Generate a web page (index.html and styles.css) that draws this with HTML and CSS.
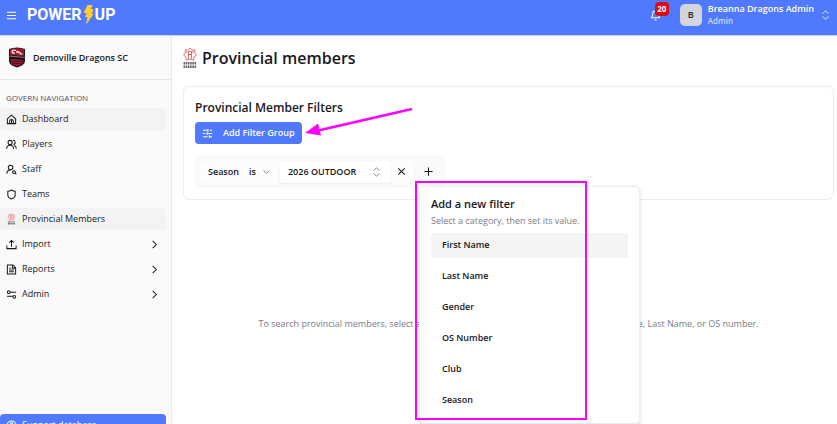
FILE: index.html
```html
<!DOCTYPE html>
<html lang="en">
<head>
    <meta charset="UTF-8">
    <meta name="viewport" content="width=device-width, initial-scale=1.0">
    <title>Provincial members</title>
    <link rel="stylesheet" href="styles.css">
</head>
<body>
    <svg class="defs" aria-hidden="true">
        <symbol id="ontario" viewBox="0 0 14 22">
            <g fill="none" stroke="#e5484d" stroke-width=".8">
                <path d="M7 1l2 2.200 3-.3-.4 3L13.500 8l-2.300 1.800-.5 3.400L7 12.200l-3.700 1-.5-3.400L.5 8l1.900-2.100-.4-3 3 .3z"/>
                <path d="M3 5.500c2-1.500 6-1.500 8 0M5 7.500h4M5.500 5v7M8.500 5v7"/>
            </g>
            <path d="M.5 16.200h13M.5 19.700h13" stroke="#666" stroke-width="2.400" stroke-dasharray="1.600 .6" fill="none"/>
        </symbol>
        <symbol id="chevron" viewBox="0 0 24 24"><path d="m8 20 8-8-8-8"/></symbol>
        <symbol id="updown" viewBox="0 0 24 24"><path d="m4 16 8 7 8-7M4 8l8-7 8 7"/></symbol>
    </svg>

    <header class="topbar">
        <button class="menu-btn" type="button" aria-label="Menu">
            <svg class="icon" viewBox="0 0 24 24"><path d="M2 5h20M2 12h20M2 19h20"/></svg>
        </button>
        <a class="brand" href="#">
            <span>POWER</span>
            <svg class="bolt" viewBox="0 0 10 22"><path d="M4 1h5L7.500 5H10L8.500 10H10L2.500 21 4 13H1.500L3 9H0z" fill="#fbce2f"/></svg>
            <span>UP</span>
        </a>
        <button class="bell" type="button" aria-label="Notifications">
            <svg class="icon" viewBox="0 0 24 24"><path d="M10.300 21a2 2 0 0 0 3.400 0M3.300 15.300A1 1 0 0 0 4 17h16a1 1 0 0 0 .7-1.700C19.400 14 18 12.500 18 8A6 6 0 0 0 6 8c0 4.500-1.400 6-2.700 7.300"/></svg>
            <span class="badge">20</span>
        </button>
        <button class="user" type="button">
            <span class="avatar">B</span>
            <span class="user-text">
                <span class="user-name">Breanna Dragons Admin</span>
                <span class="user-role">Admin</span>
            </span>
            <svg class="icon small"><use href="#updown"/></svg>
        </button>
    </header>

    <div class="shell">
        <aside class="sidebar">
            <div class="club">
                <svg class="club-logo" viewBox="0 0 18 21">
                    <path d="M1 2q8-3 16 0v12q0 4-8 6.500Q1 18 1 14z" fill="#1b1418"/>
                    <path d="M2 2.500q7-2.500 14 0V9L2 8z" fill="#a3142c"/>
                    <path d="M2.500 12l13 1v1.500q0 3-6.500 4.800-6.500-1.800-6.500-4.800z" fill="#8f1a2e"/>
                    <path d="M8 3.500q-4-1-4 1t3 1.500M9 6V4.500l2 .5v1.500M12.500 5.500v1.500h2" fill="none" stroke="#fff" stroke-width="1.200"/>
                    <path d="M0 9l18 1.500" stroke="#aaa" stroke-width=".7"/>
                    <path d="M3 14.500h12M4 16.500h10" stroke="#4d0d1a" stroke-width=".7"/>
                </svg>
                <span>Demoville Dragons SC</span>
            </div>
            <nav class="nav">
                <h2 class="nav-title">GOVERN NAVIGATION</h2>
                <a class="nav-item active" href="#">
                    <svg class="icon" viewBox="0 0 24 24"><path d="M3 10.500 12 2.500l9 8V21H3zM8 21v-5a4 4 0 0 1 8 0v5M12 13v8"/></svg>
                    <span>Dashboard</span>
                </a>
                <a class="nav-item" href="#">
                    <svg class="icon" viewBox="0 0 24 24"><circle cx="9" cy="7.500" r="4.500"/><path d="M1.500 21c0-5 3-7.500 7.500-7.500s7.500 2.500 7.500 7.500M15 3a4.500 4.500 0 0 1 1 9M18 14c3 1 4.500 3.500 4.500 7"/></svg>
                    <span>Players</span>
                </a>
                <a class="nav-item" href="#">
                    <svg class="icon" viewBox="0 0 24 24"><circle cx="10" cy="7.500" r="5"/><path d="M2 21c0-5 3-8 8-8M20 20l2.500 2.500"/><circle cx="17.500" cy="17.500" r="3"/></svg>
                    <span>Staff</span>
                </a>
                <a class="nav-item" href="#">
                    <svg class="icon" viewBox="0 0 24 24"><path d="M20 13c0 5-3.500 7.500-8 9-4.500-1.500-8-4-8-9V5c3 0 6-1 8-3 2 2 5 3 8 3z"/></svg>
                    <span>Teams</span>
                </a>
                <a class="nav-item active" href="#">
                    <svg class="mark"><use href="#ontario"/></svg>
                    <span>Provincial Members</span>
                </a>
                <a class="nav-item" href="#">
                    <svg class="icon" viewBox="0 0 24 24"><path d="M2 14v7h20v-7M12 17V3M7 8l5-5 5 5"/></svg>
                    <span>Import</span>
                    <svg class="icon arrow"><use href="#chevron"/></svg>
                </a>
                <a class="nav-item" href="#">
                    <svg class="icon" viewBox="0 0 24 24"><path d="M15 2H3v20h18V8zM14 2v7h7M7 9h3M7 13h10M7 17h10"/></svg>
                    <span>Reports</span>
                    <svg class="icon arrow"><use href="#chevron"/></svg>
                </a>
                <a class="nav-item" href="#">
                    <svg class="icon" viewBox="0 0 24 24"><circle cx="6" cy="7" r="3"/><circle cx="18" cy="17" r="3"/><path d="M9 7h13M2 16h13"/></svg>
                    <span>Admin</span>
                    <svg class="icon arrow"><use href="#chevron"/></svg>
                </a>
            </nav>
            <button class="support" type="button">
                <svg class="icon" viewBox="0 0 24 24"><circle cx="12" cy="12" r="10"/><path d="M9 9a3 3 0 1 1 4 3c-1 .5-1 1-1 2M12 17v.5"/></svg>
                <span>Support database</span>
            </button>
        </aside>

        <main class="main">
            <h1 class="page-title">
                <svg class="title-mark"><use href="#ontario"/></svg>
                <span>Provincial members</span>
            </h1>

            <section class="card">
                <h2 class="card-title">Provincial Member Filters</h2>
                <div class="add-row">
                    <button class="add-group" type="button">
                        <svg class="icon" viewBox="0 0 24 24"><path d="M2 5h11M17 5h5M13 2v6M2 12h5M11 12h11M11 9v6M2 19h10M16 19h6M16 16v6"/></svg>
                        <span>Add Filter Group</span>
                    </button>
                    <svg class="pointer" viewBox="0 0 110 30">
                        <path d="M108 2 12 24" stroke="#ff00ff" stroke-width="2.500"/>
                        <path d="M1 26 14 16.500 17 28.500z" fill="#ff00ff"/>
                    </svg>
                </div>
                <div class="group">
                    <div class="rule">
                        <label class="field" for="op">Season</label>
                        <span class="pick op">
                            <select id="op"><option>is</option></select>
                            <svg class="icon small down"><use href="#chevron"/></svg>
                        </span>
                        <span class="pick value">
                            <select aria-label="Season value"><option>2026 OUTDOOR</option></select>
                            <svg class="icon small"><use href="#updown"/></svg>
                        </span>
                        <button class="square" type="button" aria-label="Remove filter">
                            <svg class="icon" viewBox="0 0 24 24"><path d="M5 5l14 14M19 5 5 19"/></svg>
                        </button>
                    </div>
                    <div class="add-filter">
                        <button class="square" type="button" aria-label="Add filter">
                            <svg class="icon" viewBox="0 0 24 24"><path d="M12 3v18M3 12h18"/></svg>
                        </button>
                        <div class="popover">
                            <h3 class="popover-title">Add a new filter</h3>
                            <p class="popover-text">Select a category, then set its value.</p>
                            <div class="options">
                                <button class="option active" type="button">First Name</button>
                                <button class="option" type="button">Last Name</button>
                                <button class="option" type="button">Gender</button>
                                <button class="option" type="button">OS Number</button>
                                <button class="option" type="button">Club</button>
                                <button class="option" type="button">Season</button>
                            </div>
                            <div class="highlight"></div>
                        </div>
                    </div>
                </div>
            </section>

            <p class="empty">To search provincial members, select a season filter and then add at least one of First Name, Last Name, or OS number.</p>
        </main>
    </div>
</body>
</html>
```
FILE: styles.css
```css
* {
    box-sizing: border-box;
}
body {
    margin: 0;
    height: 100vh;
    overflow: hidden;
    background-color: #fff;
    color: #18181b;
    font-family: "Open Sans", "Noto Sans", sans-serif;
    font-size: 9px;
    line-height: 14px;
}
h1, h2, h3, p {
    margin: 0;
}
button, select {
    padding: 0;
    border: none;
    background: none;
    color: inherit;
    font: inherit;
    cursor: pointer;
}
a {
    color: inherit;
    text-decoration: none;
}
.defs {
    display: none;
}
.icon {
    flex: none;
    width: 11px;
    height: 11px;
    fill: none;
    stroke: currentColor;
    stroke-width: 2.2;
}
.icon.small {
    width: 9px;
    height: 10px;
}

.topbar {
    display: flex;
    align-items: center;
    height: 36px;
    padding: 0 7px 5px 6px;
    background-color: #5079fe;
    border-bottom: 1px solid #cdd5f3;
    color: #fff;
}
.menu-btn {
    display: flex;
}
.brand {
    display: flex;
    align-items: center;
    margin-right: auto;
    padding-left: 10px;
    font-family: Roboto, sans-serif;
    font-size: 16px;
    font-weight: 700;
    line-height: 22px;
}
.bolt {
    width: 11px;
    height: 22px;
    margin: 0 1px;
}
.bell {
    position: relative;
    display: flex;
    margin-right: 19px;
}
.badge {
    position: absolute;
    top: -8px;
    left: 5px;
    width: 14px;
    border-radius: 4px;
    background-color: #dc0a14;
    font-size: 8px;
    font-weight: 700;
}
.user {
    display: flex;
    align-items: center;
    gap: 6px;
    text-align: left;
}
.avatar {
    width: 22px;
    border-radius: 5px;
    background-color: #d3d5dc;
    color: #27272a;
    font-weight: 600;
    line-height: 22px;
    text-align: center;
}
.user-text {
    display: flex;
    flex-direction: column;
    padding-right: 1px;
    line-height: 12px;
}
.user-name {
    font-weight: 600;
}
.user-role {
    color: #ccd8ff;
    font-size: 8px;
    font-weight: 600;
}

.shell {
    display: flex;
    height: calc(100vh - 24px);
}
.sidebar {
    display: flex;
    flex: none;
    flex-direction: column;
    width: 172px;
    border-right: 1px solid #e5e7eb;
    background-color: #fafafa;
}
.club {
    display: flex;
    align-items: center;
    gap: 7px;
    height: 44px;
    padding-left: 8px;
    border-bottom: 1px solid #e5e7eb;
    font-weight: 600;
}
.club-logo {
    width: 18px;
    height: 21px;
}
.nav {
    display: flex;
    flex-direction: column;
    gap: 3px;
    padding: 10px 5px 0 0;
}
.nav-title {
    padding-left: 6px;
    color: #52525b;
    font-size: 8px;
    font-weight: 500;
    line-height: 15px;
}
.nav-item {
    display: flex;
    align-items: center;
    gap: 5px;
    height: 22px;
    padding: 0 6px;
    border-radius: 4px;
}
.nav-item.active {
    background-color: #f3f3f4;
}
.mark {
    width: 11px;
    height: 12px;
}
.arrow {
    margin-left: auto;
}
.support {
    display: flex;
    align-items: center;
    gap: 5px;
    height: 22px;
    margin: auto 5px 0 0;
    padding: 0 6px;
    border-radius: 4px;
    background-color: #5079fe;
    color: #fff;
}

.main {
    flex: 1;
    padding: 10px 3px 0 11px;
}
.page-title {
    display: flex;
    align-items: center;
    gap: 5px;
    font-size: 16px;
    font-weight: 600;
    line-height: 24px;
}
.title-mark {
    width: 14px;
    height: 22px;
}
.card {
    margin-top: 16px;
    padding: 12px 11px 11px;
    border: 1px solid #ededf0;
    border-radius: 6px;
}
.card-title {
    font-size: 12px;
    font-weight: 600;
    line-height: 18px;
}
.add-row {
    display: flex;
    position: relative;
    margin-top: 5px;
}
.add-group {
    display: flex;
    align-items: center;
    gap: 10px;
    height: 22px;
    padding: 0 7px;
    border-radius: 4px;
    background-color: #5079fe;
    color: #fff;
    font-weight: 600;
}
.pointer {
    position: absolute;
    top: -15px;
    left: 109px;
    width: 110px;
    height: 30px;
}
.group {
    display: flex;
    align-items: center;
    width: fit-content;
    height: 33px;
    margin-top: 11px;
    padding-left: 5px;
    border-radius: 5px;
    background-color: #f9f9f9;
}
.rule {
    display: flex;
    align-items: center;
    padding-left: 8px;
    border-radius: 4px;
    background-color: #fdfdfd;
    font-weight: 600;
}
.field {
    margin-right: 10px;
}
.pick {
    display: flex;
    align-items: center;
    color: #71717a;
}
.pick select {
    appearance: none;
    color: #18181b;
}
.op {
    gap: 6px;
    margin-right: 9px;
}
.down {
    transform: rotate(90deg);
}
.value {
    gap: 15px;
    height: 22px;
    padding: 0 10px 0 8px;
    border-radius: 4px;
    background-color: #fff;
    box-shadow: 0 1px 2px #ececee;
}
.square {
    display: flex;
    align-items: center;
    justify-content: center;
    width: 22px;
    height: 22px;
}
.add-filter {
    position: relative;
    padding: 0 5px;
}
.popover {
    position: absolute;
    z-index: 1;
    top: 25px;
    left: 6px;
    width: 221px;
    padding: 10px 11px;
    border: 1px solid #ececee;
    border-radius: 5px;
    background-color: #fff;
    box-shadow: 0 2px 4px rgba(0, 0, 0, 0.15);
}
.popover-title {
    font-size: 11px;
    font-weight: 600;
}
.popover-text {
    margin: 3px 0 5px;
    color: #7b7b85;
}
.options {
    display: flex;
    flex-direction: column;
    gap: 6px;
}
.option {
    height: 25px;
    padding: 0 11px;
    border-radius: 4px;
    font-weight: 600;
    text-align: left;
}
.option.active {
    background-color: #f4f4f4;
}
.highlight {
    position: absolute;
    top: -6px;
    left: -5px;
    width: 172px;
    height: 239px;
    border: 2px solid #ff00ff;
}
.empty {
    margin-top: 117px;
    color: #7b7b85;
    text-align: center;
}
```
